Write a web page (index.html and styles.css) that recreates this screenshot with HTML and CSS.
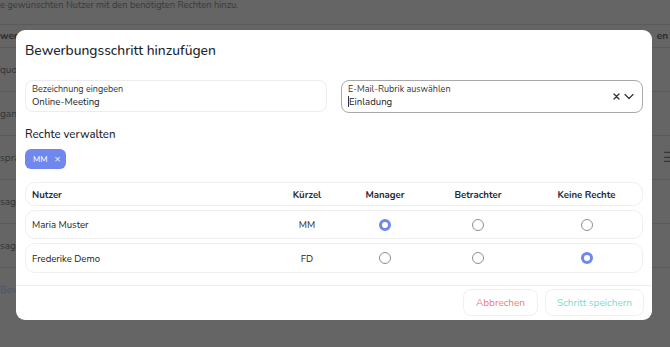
FILE: index.html
```html
<!DOCTYPE html>
<html lang="de">
<head>
<meta charset="utf-8">
<link rel="stylesheet" href="styles.css">
</head>
<body>
<div class="page">
  <p class="intro">e gewünschten Nutzer mit den benötigten Rechten hinzu.</p>
  <div class="bg-table">
    <div class="bg-row bg-head"><span>werb</span><span class="bg-right">en</span></div>
    <div class="bg-row"><span>quo</span></div>
    <div class="bg-row"><span>gan</span></div>
    <div class="bg-row"><span>sprä</span><span class="bg-menu">☰</span></div>
    <div class="bg-row"><span>sage</span></div>
    <div class="bg-row"><span>sage</span></div>
    <div class="bg-row bg-link"><span>Bew</span></div>
  </div>
</div>

<div class="modal">
  <h1 class="title">Bewerbungsschritt hinzufügen</h1>
  <div class="fields">
    <div class="field">
      <span class="label">Bezeichnung eingeben</span>
      <span class="value">Online-Meeting</span>
    </div>
    <div class="field field-focus">
      <span class="label">E-Mail-Rubrik auswählen</span>
      <span class="value"><span class="caret"></span>Einladung</span>
      <span class="icons">
        <svg width="7" height="7" viewBox="0 0 7 7"><path d="M1 1L6 6M6 1L1 6" stroke="#333" stroke-width="1.3" stroke-linecap="round"/></svg>
        <svg width="10" height="7" viewBox="0 0 10 7"><path d="M1 1.5L5 5.5L9 1.5" fill="none" stroke="#333" stroke-width="1.2" stroke-linecap="round" stroke-linejoin="round"/></svg>
      </span>
    </div>
  </div>
  <h2 class="subtitle">Rechte verwalten</h2>
  <div class="chips"><span class="chip">MM <span class="chip-x">×</span></span></div>
  <div class="table">
    <div class="row head">
      <span class="name">Nutzer</span><span>Kürzel</span><span>Manager</span><span>Betrachter</span><span>Keine Rechte</span>
    </div>
    <div class="row">
      <span class="name">Maria Muster</span><span>MM</span>
      <span><i class="radio on"></i></span><span><i class="radio"></i></span><span><i class="radio"></i></span>
    </div>
    <div class="row tall">
      <span class="name">Frederike Demo</span><span>FD</span>
      <span><i class="radio"></i></span><span><i class="radio"></i></span><span><i class="radio on"></i></span>
    </div>
  </div>
  <div class="footer">
    <button class="btn btn-cancel">Abbrechen</button>
    <button class="btn btn-save">Schritt speichern</button>
  </div>
</div>
</body>
</html>
```

FILE: styles.css
```css
* { box-sizing: border-box; }
html, body { margin: 0; padding: 0; }
body {
  width: 670px;
  height: 347px;
  overflow: hidden;
  background: #656565;
  font-family: "Nunito", "Lato", "Open Sans", sans-serif;
  position: relative;
}
.page { color: #2f2f2f; }
.intro {
  margin: 0;
  padding: 0;
  font-size: 9.3px;
  line-height: 10px;
  color: #3a3a3a;
  white-space: nowrap;
}
.bg-table { margin-top: 14px; }
.bg-row {
  height: 44px;
  border-top: 1px solid #5a5a5a;
  display: flex;
  align-items: center;
  justify-content: space-between;
  font-size: 10px;
  color: #333;
}
.bg-row:first-child { height: 23px; font-weight: 700; color: #2a2a2a; }
.bg-right { margin-right: 2px; }
.bg-menu { margin-right: -6px; font-size: 14px; color: #333; }
.bg-link { color: #4c5470; }

.modal {
  position: absolute;
  left: 16px;
  top: 30px;
  width: 636px;
  height: 290px;
  background: #fff;
  border-radius: 9px;
  padding: 0 9px;
  display: flex;
  flex-direction: column;
}
.title {
  margin: 11px 0 0;
  font-size: 13.8px;
  line-height: 20px;
  font-weight: 500;
  color: #1a2530;
}
.fields {
  margin-top: 19px;
  display: grid;
  grid-template-columns: 302px 302px;
  column-gap: 14px;
}
.field {
  height: 32px;
  border: 1px solid #ececec;
  border-radius: 8px;
  padding: 3px 6px 0;
  display: flex;
  flex-direction: column;
  position: relative;
}
.field-focus { border-color: #a9a9a9; height: 33px; }
.label { font-size: 9px; line-height: 11px; color: #333; }
.value { font-size: 9.6px; line-height: 13px; color: #222; display: flex; align-items: center; }
.caret { display: inline-block; width: 1px; height: 11px; background: #333; }
.icons {
  position: absolute;
  right: 8px;
  top: 12px;
  display: flex;
  align-items: center;
  gap: 4px;
}
.subtitle {
  margin: 13px 0 0;
  font-size: 11.4px;
  line-height: 16px;
  font-weight: 500;
  color: #1a2530;
}
.chips { margin-top: 7px; display: flex; }
.chip {
  background: #6f87ee;
  color: #fff;
  font-size: 8.5px;
  border-radius: 6px;
  height: 20px;
  width: 41px;
  padding-left: 8px;
  display: flex;
  align-items: center;
  gap: 7px;
}
.chip-x { font-size: 10px; }
.table { margin-top: 13px; display: flex; flex-direction: column; gap: 4px; }
.row {
  display: grid;
  grid-template-columns: 245px 72px 84px 102px 115px;
  align-items: center;
  height: 29px;
  border: 1px solid #efefef;
  border-radius: 10px;
  font-size: 9.6px;
  color: #222;
  text-align: center;
}
.row.head { height: 24px; font-weight: 700; color: #1e2a35; }
.row.tall { height: 30px; }
.row > span { display: flex; justify-content: center; }
.row > .name { justify-content: flex-start; padding-left: 6px; }
.radio {
  display: block;
  width: 12px;
  height: 12px;
  border-radius: 50%;
  border: 1px solid #8f8f8f;
}
.radio.on { border: 3px solid #6f87ee; }
.footer {
  margin: 12px -9px 0;
  border-top: 1px solid #f0f0f0;
  padding: 3px 8px 0;
  display: flex;
  justify-content: flex-end;
  gap: 7px;
}
.btn {
  font-family: inherit;
  background: #fff;
  border: 1px solid #f0f0f0;
  border-radius: 8px;
  height: 27px;
  font-size: 10px;
}
.btn-cancel { width: 75px; color: #f07c7c; }
.btn-save { width: 99px; color: #80d9c9; }
```
